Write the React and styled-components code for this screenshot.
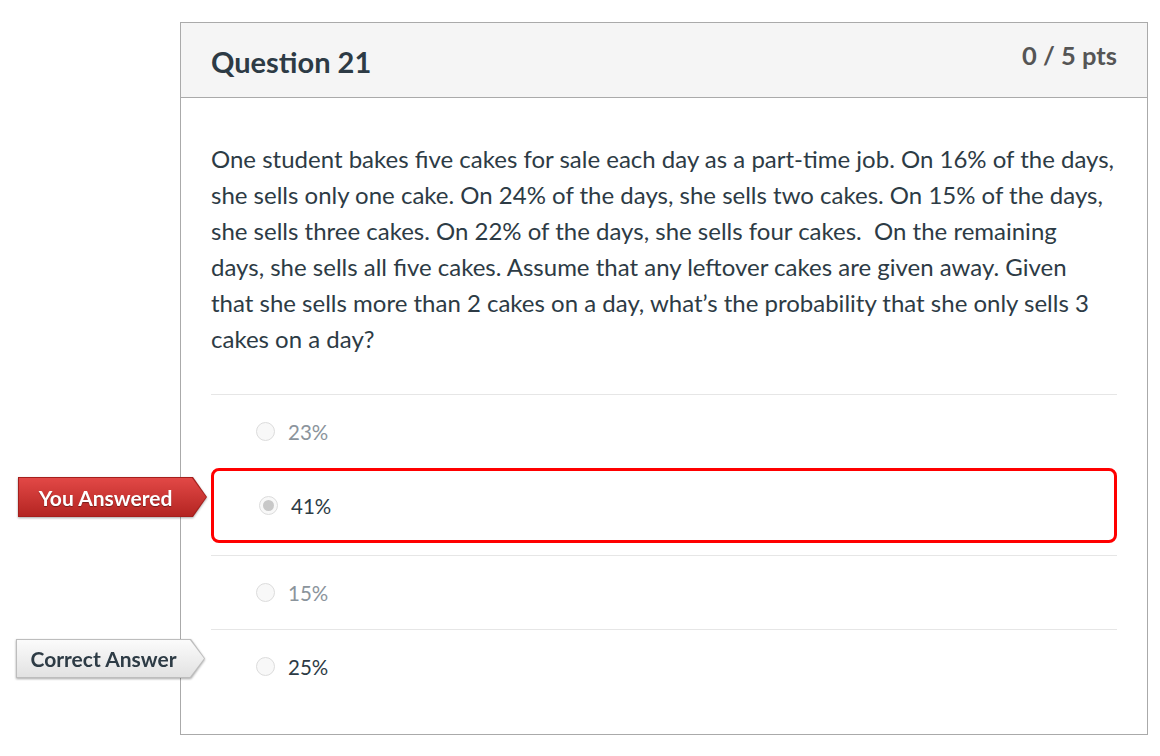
import React from "react";
import styled, { createGlobalStyle } from "styled-components";

const GlobalStyle = createGlobalStyle`
  body {
    margin: 0;
    background: #fff;
    font-family: Lato, "Open Sans", "Liberation Sans", sans-serif;
    color: #2d3b45;
  }
`;

const Page = styled.div`
  padding: 22px 0 0 180px;
  width: 968px;
`;

const Card = styled.div`
  border: 1px solid #aaaaaa;
  background: #fff;
`;

const Header = styled.div`
  height: 75px;
  box-sizing: border-box;
  background: #f5f5f5;
  border-bottom: 1px solid #aaaaaa;
  padding: 0 30px;
  display: flex;
  justify-content: space-between;
  align-items: flex-start;
`;

const Title = styled.h2`
  margin: 24px 0 0;
  font-size: 29px;
  line-height: 30px;
  font-weight: 700;
  color: #2d3b45;
`;

const Points = styled.div`
  margin-top: 19px;
  font-size: 25.5px;
  line-height: 26px;
  font-weight: 700;
  color: #555;
`;

const Body = styled.div`
  padding: 43px 30px 31px;
`;

const Text = styled.p`
  margin: 0 0 37px;
  font-size: 24px;
  line-height: 36px;
  white-space: pre-wrap;
`;

const Answer = styled.div`
  position: relative;
  display: flex;
  align-items: center;
  gap: 13px;
  box-sizing: border-box;
  height: ${(p) => (p.$picked ? "75px" : "74px")};
  margin-bottom: ${(p) => (p.$picked ? "12px" : "0")};
  padding-left: 45px;
  border: ${(p) => (p.$picked ? "3px solid #ff0000" : "none")};
  border-top: ${(p) => (p.$picked ? "3px solid #ff0000" : "1px solid #e6e6e6")};
  border-radius: ${(p) => (p.$picked ? "8px" : "0")};
  font-size: 20.5px;
  color: ${(p) => (p.$muted ? "#8b949c" : "#2d3b45")};
`;

const Radio = styled.span`
  width: 17px;
  height: 17px;
  border-radius: 50%;
  border: 1px solid #dcdcdc;
  background: #f8f8f8;
  display: flex;
  align-items: center;
  justify-content: center;

  &::after {
    content: "";
    display: ${(p) => (p.$checked ? "block" : "none")};
    width: 11px;
    height: 11px;
    border-radius: 50%;
    background: #c8c8c8;
  }
`;

const TagWrap = styled.div`
  position: absolute;
  right: calc(100% + ${(p) => p.$gap}px);
  top: ${(p) => p.$top}px;
  width: 189px;
  height: ${(p) => p.$h}px;
  filter: drop-shadow(0 1px 1px rgba(0, 0, 0, 0.35));
`;

const arrow = `polygon(0 0, calc(100% - 14px) 0, 100% 50%, calc(100% - 14px) 100%, 0 100%)`;

const TagEdge = styled.div`
  height: 100%;
  padding: 1px;
  box-sizing: border-box;
  clip-path: ${arrow};
  background: ${(p) => (p.$red ? "#a51f1c" : "#bdbdbd")};
`;

const TagFace = styled.div`
  height: 100%;
  clip-path: ${arrow};
  background: ${(p) =>
    p.$red
      ? "linear-gradient(#e24846, #b42522)"
      : "linear-gradient(#fbfbfb, #e2e2e2)"};
  display: flex;
  align-items: center;
  justify-content: center;
  padding-right: 14px;
  font-size: 21px;
  font-weight: 700;
  color: ${(p) => (p.$red ? "#fff" : "#2d3b45")};
  text-shadow: ${(p) => (p.$red ? "0 1px 1px rgba(0,0,0,0.4)" : "none")};
  white-space: nowrap;
`;

const Tag = ({ red, top, gap, h, children }) => (
  <TagWrap $top={top} $gap={gap} $h={h}>
    <TagEdge $red={red}>
      <TagFace $red={red}>{children}</TagFace>
    </TagEdge>
  </TagWrap>
);

export default function App() {
  return (
    <>
      <GlobalStyle />
      <Page>
        <Card>
          <Header>
            <Title>Question 21</Title>
            <Points>0 / 5 pts</Points>
          </Header>
          <Body>
            <Text>
              One student bakes five cakes for sale each day as a part-time job. On 16% of the days, she sells only one cake. On 24% of the days, she sells two cakes. On 15% of the days, she sells three cakes. On 22% of the days, she sells four cakes.  On the remaining
              <br />
              days, she sells all five cakes. Assume that any leftover cakes are given away. Given
              <br />
              that she sells more than 2 cakes on a day, what’s the probability that she only sells 3 cakes on a day?
            </Text>
            <Answer $muted>
              <Radio />
              23%
            </Answer>
            <Answer $picked>
              <Tag red top={6} gap={7} h={40}>You Answered</Tag>
              <Radio $checked />
              41%
            </Answer>
            <Answer $muted>
              <Radio />
              15%
            </Answer>
            <Answer>
              <Tag top={9} gap={6} h={39}>Correct Answer</Tag>
              <Radio />
              25%
            </Answer>
          </Body>
        </Card>
      </Page>
    </>
  );
}
